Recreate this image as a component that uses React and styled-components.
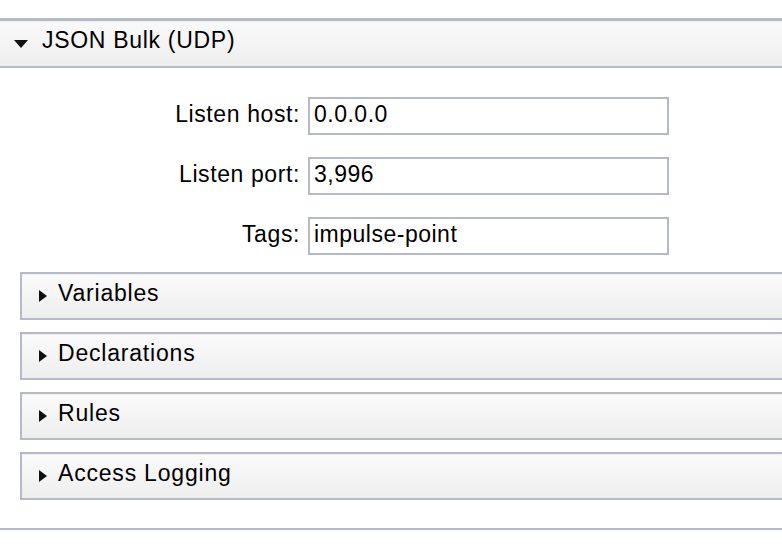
import styled, { createGlobalStyle } from "styled-components";

const Global = createGlobalStyle`
  html, body {
    margin: 0;
    padding: 0;
    background: #fff;
  }
  body {
    font-family: "Liberation Sans", Arial, sans-serif;
    color: #000;
  }
`;

const Page = styled.div`
  width: 782px;
  height: 558px;
  overflow: hidden;
  padding-top: 18px;
  box-sizing: border-box;
`;

const Panel = styled.section`
  border-bottom: 2px solid #b6bac6;
`;

const PanelHeader = styled.div`
  height: 50px;
  box-sizing: border-box;
  display: flex;
  align-items: center;
  gap: 14px;
  padding: 0 0 6px 14px;
  border-top: 3px solid #b6bac6;
  border-bottom: 2px solid #b6bac6;
  background: linear-gradient(#f1ecee 0, #f9f9f9 2px, #eeeeee 100%);
  font-size: 23px;
  letter-spacing: 0.7px;
`;

const Arrow = styled.span`
  width: 0;
  height: 0;
  flex: none;
  ${(p) =>
    p.open
      ? `border-left: 7px solid transparent;
         border-right: 7px solid transparent;
         border-top: 8px solid #111;
         margin-top: 6px;`
      : `border-top: 6px solid transparent;
         border-bottom: 6px solid transparent;
         border-left: 8px solid #111;
         margin-top: 5px;`}
`;

const Body = styled.div`
  padding: 29px 0 28px 20px;
`;

const Form = styled.div`
  display: grid;
  grid-template-columns: 280px 361px;
  column-gap: 8px;
  row-gap: 22px;
  align-items: center;
  margin-bottom: 17px;
`;

const Label = styled.label`
  text-align: right;
  font-size: 23px;
  letter-spacing: 0.6px;
  padding-bottom: 4px;
`;

const Field = styled.div`
  height: 38px;
  box-sizing: border-box;
  border: 2px solid #b6bac6;
  display: flex;
  align-items: center;
  padding: 0 0 4px 4px;
  font-size: 23px;
  letter-spacing: 0.5px;
`;

const SubList = styled.div`
  display: flex;
  flex-direction: column;
  gap: 12px;
  margin-right: -20px;
`;

const SubPanel = styled.div`
  height: 48px;
  box-sizing: border-box;
  display: flex;
  align-items: center;
  gap: 11px;
  padding: 0 0 6px 17px;
  border: 2px solid #b6bac6;
  background: linear-gradient(#f2eff0 0, #fafafa 2px, #eeeeee 100%);
  font-size: 23px;
  letter-spacing: 0.8px;
`;

const fields = [
  ["Listen host:", "0.0.0.0"],
  ["Listen port:", "3,996"],
  ["Tags:", "impulse-point"],
];

const sections = ["Variables", "Declarations", "Rules", "Access Logging"];

export default function App() {
  return (
    <Page>
      <Global />
      <Panel>
        <PanelHeader>
          <Arrow open />
          JSON Bulk (UDP)
        </PanelHeader>
        <Body>
          <Form>
            {fields.map(([label, value]) => [
              <Label key={label}>{label}</Label>,
              <Field key={label + "v"}>{value}</Field>,
            ])}
          </Form>
          <SubList>
            {sections.map((s) => (
              <SubPanel key={s}>
                <Arrow />
                {s}
              </SubPanel>
            ))}
          </SubList>
        </Body>
      </Panel>
    </Page>
  );
}
